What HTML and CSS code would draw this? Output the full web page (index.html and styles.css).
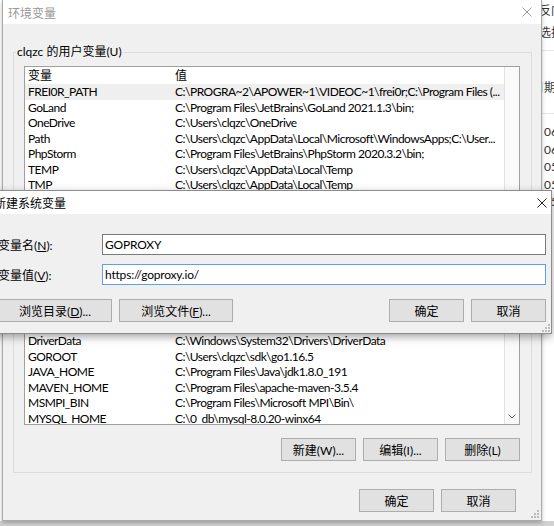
FILE: index.html
```html
<!DOCTYPE html>
<html lang="zh-CN">
<head>
    <meta charset="UTF-8">
    <meta name="viewport" content="width=device-width, initial-scale=1.0">
    <link rel="stylesheet" href="styles.css">
    <title>环境变量</title>
</head>
<body>
    <div class="desk">
        <div class="edge-left"></div>

        <div class="env-window">
            <div class="titlebar">
                <span class="title">环境变量</span>
                <svg class="close-x" viewBox="0 0 10 10"><path d="M0.5 0.5 L9.5 9.5 M9.5 0.5 L0.5 9.5"/></svg>
            </div>

            <div class="env-body">
                <fieldset class="group">
                    <legend>clqzc 的用户变量(U)</legend>
                    <div class="listview user-list">
                        <div class="lv-main">
                            <div class="lv-head"><span>变量</span><span>值</span></div>
                            <div class="lv-row selected"><span>FREI0R_PATH</span><span>C:\PROGRA~2\APOWER~1\VIDEOC~1\frei0r;C:\Program Files (...</span></div>
                            <div class="lv-row"><span>GoLand</span><span>C:\Program Files\JetBrains\GoLand 2021.1.3\bin;</span></div>
                            <div class="lv-row"><span>OneDrive</span><span>C:\Users\clqzc\OneDrive</span></div>
                            <div class="lv-row"><span>Path</span><span>C:\Users\clqzc\AppData\Local\Microsoft\WindowsApps;C:\User...</span></div>
                            <div class="lv-row"><span>PhpStorm</span><span>C:\Program Files\JetBrains\PhpStorm 2020.3.2\bin;</span></div>
                            <div class="lv-row"><span>TEMP</span><span>C:\Users\clqzc\AppData\Local\Temp</span></div>
                            <div class="lv-row"><span>TMP</span><span>C:\Users\clqzc\AppData\Local\Temp</span></div>
                        </div>
                        <div class="lv-scroll"></div>
                    </div>
                    <div class="btn-row">
                        <button class="btn">新建(N)...</button>
                        <button class="btn">编辑(E)...</button>
                        <button class="btn">删除(D)</button>
                    </div>
                </fieldset>

                <fieldset class="group sys-group">
                    <legend>系统变量(S)</legend>
                    <div class="listview sys-list">
                        <div class="lv-main">
                            <div class="lv-head"><span>变量</span><span>值</span></div>
                            <div class="lv-row"><span>DriverData</span><span>C:\Windows\System32\Drivers\DriverData</span></div>
                            <div class="lv-row"><span>GOROOT</span><span>C:\Users\clqzc\sdk\go1.16.5</span></div>
                            <div class="lv-row"><span>JAVA_HOME</span><span>C:\Program Files\Java\jdk1.8.0_191</span></div>
                            <div class="lv-row"><span>MAVEN_HOME</span><span>C:\Program Files\apache-maven-3.5.4</span></div>
                            <div class="lv-row"><span>MSMPI_BIN</span><span>C:\Program Files\Microsoft MPI\Bin\</span></div>
                            <div class="lv-row"><span>MYSQL_HOME</span><span>C:\0_db\mysql-8.0.20-winx64</span></div>
                        </div>
                        <div class="lv-scroll">
                            <svg class="chevron" viewBox="0 0 8 5"><path d="M0.5 0.5 L4 4 L7.5 0.5"/></svg>
                        </div>
                    </div>
                    <div class="btn-row">
                        <button class="btn">新建(W)...</button>
                        <button class="btn">编辑(I)...</button>
                        <button class="btn">删除(L)</button>
                    </div>
                </fieldset>

                <div class="footer-row">
                    <button class="btn">确定</button>
                    <button class="btn">取消</button>
                </div>
            </div>

            <svg class="grip" viewBox="0 0 8 8"><path d="M6 0h2v2H6zM3 3h2v2H3zM6 3h2v2H6zM0 6h2v2H0zM3 6h2v2H3zM6 6h2v2H6z"/></svg>
        </div>

        <!-- window behind, only its left edge shows -->
        <div class="behind">
            <div class="behind-top">
                <div class="behind-text">反向</div>
                <div class="behind-text">选择</div>
            </div>
            <div class="behind-head">日期</div>
            <ul class="behind-list">
                <li>06</li>
                <li>06</li>
                <li>05</li>
                <li>05</li>
                <li>05</li>
            </ul>
        </div>
    </div>

    <div class="dialog">
        <div class="titlebar dlg-titlebar">
            <span class="title">新建系统变量</span>
            <svg class="close-x" viewBox="0 0 10 10"><path d="M0.5 0.5 L9.5 9.5 M9.5 0.5 L0.5 9.5"/></svg>
        </div>
        <div class="dlg-body">
            <div class="field">
                <label for="var-name">变量名(<u>N</u>):</label>
                <input type="text" id="var-name" value="GOPROXY">
            </div>
            <div class="field">
                <label for="var-value">变量值(<u>V</u>):</label>
                <input type="text" id="var-value" class="focused" value="https://goproxy.io/">
            </div>
            <div class="dlg-actions">
                <button class="btn wide">浏览目录(<u>D</u>)...</button>
                <button class="btn wide">浏览文件(<u>F</u>)...</button>
                <span class="spacer"></span>
                <button class="btn">确定</button>
                <button class="btn">取消</button>
            </div>
        </div>
        <svg class="grip" viewBox="0 0 8 8"><path d="M6 0h2v2H6zM3 3h2v2H3zM6 3h2v2H6zM0 6h2v2H0zM3 6h2v2H3zM6 6h2v2H6z"/></svg>
    </div>
</body>
</html>
```

FILE: styles.css
```css
* {
    margin: 0;
    padding: 0;
    box-sizing: border-box;
}
body {
    width: 554px;
    height: 526px;
    overflow: hidden;
    position: relative;
    background: #d2d2d2;
    font-family: "Segoe UI", Lato, "Noto Sans CJK SC", sans-serif;
    font-size: 12px;
    color: #000;
}
button, input, label, legend {
    font: inherit;
    color: inherit;
}

.desk {
    display: flex;
    height: 521px;
}
.edge-left {
    width: 2px;
    background: #fff;
}

/* main window */
.env-window {
    position: relative;
    width: 540px;
    display: flex;
    flex-direction: column;
    background: #f0f0f0;
    border: 1px solid #a9a9a9;
    border-top: none;
    box-shadow: 0 2px 4px rgba(0, 0, 0, 0.25);
}
.titlebar {
    height: 24px;
    flex: none;
    display: flex;
    align-items: center;
    padding: 0 9px 0 5px;
    background: #fff;
}
.titlebar .title {
    flex: 1;
    color: #999;
    white-space: nowrap;
}
.close-x {
    width: 10px;
    height: 10px;
    stroke: #999;
    stroke-width: 1;
    fill: none;
}

.env-body {
    flex: 1;
    display: flex;
    flex-direction: column;
    padding: 20px 9px 0 10px;
}
.group {
    border: 1px solid #dcdcdc;
    padding: 6px 11px 11px 10px;
    min-inline-size: 0;
}
.group legend {
    margin-left: -8px;
    padding: 0 1px;
    line-height: 16px;
}
.sys-group {
    margin-top: 9px;
}

/* list views */
.listview {
    display: flex;
    background: #fff;
    border: 1px solid #a0a0a0;
    overflow: hidden;
}
.user-list {
    height: 170px;
}
.sys-list {
    height: 110px;
}
.lv-main {
    flex: 1;
    min-width: 0;
}
.lv-head, .lv-row {
    display: grid;
    grid-template-columns: 147px 1fr;
    padding-left: 3px;
    white-space: nowrap;
    overflow: hidden;
}
.lv-head {
    height: 17px;
    line-height: 17px;
}
.lv-row {
    height: 15.5px;
    line-height: 15.5px;
    letter-spacing: -0.5px;
}
.lv-row span {
    overflow: hidden;
}
.lv-row.selected {
    background: #efefef;
}
.lv-scroll {
    width: 15px;
    flex: none;
    display: flex;
    flex-direction: column;
    justify-content: flex-end;
    align-items: center;
    border-left: 1px solid #e2e2e2;
    background: #fafafa;
}
.chevron {
    width: 8px;
    height: 5px;
    margin-bottom: 5px;
    stroke: #606060;
    fill: none;
}

/* buttons */
.btn {
    height: 23px;
    width: 75px;
    background: #e1e1e1;
    border: 1px solid #adadad;
    white-space: nowrap;
}
.btn-row {
    display: flex;
    justify-content: flex-end;
    gap: 7px;
    margin-top: 13px;
}
.footer-row {
    display: flex;
    justify-content: flex-end;
    gap: 7px;
    margin-top: 16px;
    padding-right: 16px;
}

.grip {
    position: absolute;
    right: 2px;
    bottom: 2px;
    width: 8px;
    height: 8px;
    fill: #bcbcbc;
}

/* strip of the window lying behind */
.behind {
    width: 12px;
    overflow: hidden;
    background: #fff;
    color: #333;
    white-space: nowrap;
}
.behind-top {
    height: 51px;
    border-bottom: 1px solid #e5e5e5;
}
.behind-text {
    margin-left: -3px;
    line-height: 22px;
}
.behind-head {
    height: 63px;
    padding-top: 29px;
    margin-left: -10px;
    line-height: 16px;
    border-bottom: 1px solid #e5e5e5;
}
.behind-list {
    list-style: none;
    padding-top: 9px;
    margin-left: 2px;
}
.behind-list li {
    line-height: 17.5px;
}

/* the "new system variable" dialog on top */
.dialog {
    position: absolute;
    top: 190px;
    left: -14px;
    width: 566px;
    height: 144px;
    display: flex;
    flex-direction: column;
    background: #f0f0f0;
    border: 1px solid #8c8c8c;
    box-shadow: 0 3px 8px rgba(0, 0, 0, 0.35);
}
.dlg-titlebar {
    height: 23px;
    padding: 0 4px 0 7px;
}
.dlg-titlebar .title {
    color: #000;
}
.dlg-titlebar .close-x {
    stroke: #222;
}
.dlg-body {
    flex: 1;
    padding: 20px 5px 0 11px;
}
.field {
    display: flex;
    align-items: center;
    height: 21px;
}
.field + .field {
    margin-top: 9px;
}
.field label {
    width: 104px;
    flex: none;
}
.field input {
    flex: 1;
    height: 21px;
    padding: 0 2px;
    background: #fff;
    border: 1px solid #7a7a7a;
    outline: none;
    letter-spacing: -0.2px;
}
.field input.focused {
    border-color: #5ea1e6;
}
.dlg-actions {
    display: flex;
    gap: 7px;
    margin-top: 14px;
}
.dlg-actions .wide {
    width: 114px;
}
.spacer {
    flex: 1;
}
.dialog .grip {
    right: 1px;
    bottom: 1px;
}
```
